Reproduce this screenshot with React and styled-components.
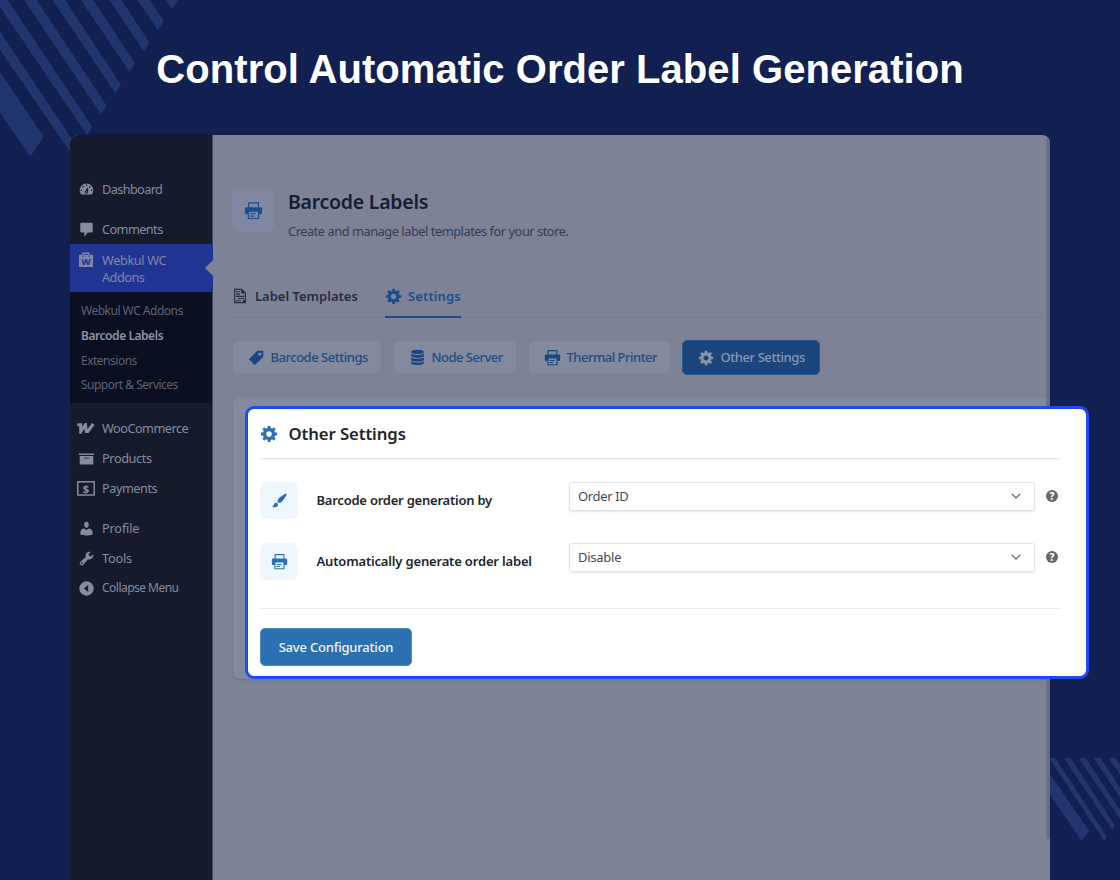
import React from 'react';
import styled, { createGlobalStyle } from 'styled-components';

const GlobalStyle = createGlobalStyle`
  * { box-sizing: border-box; }
  body {
    margin: 0;
    background: #112050;
    font-family: "Noto Sans", "Open Sans", sans-serif;
  }
`;

const Page = styled.div`
  position: relative;
  width: 1120px;
  height: 880px;
  overflow: hidden;
  background: #112050;
`;

const Stripes = styled.svg`
  position: absolute;
  inset: 0;
  fill: #21366f;
`;

const Title = styled.h1`
  position: relative;
  margin: 0;
  height: 135px;
  padding-top: 45px;
  font: bold 40px/48px "Liberation Sans", Arial, sans-serif;
  letter-spacing: 0.05px;
  text-align: center;
  color: #fff;
`;

const Window = styled.div`
  position: relative;
  display: flex;
  width: 980px;
  height: 745px;
  margin: 0 auto;
  border-radius: 8px 8px 0 0;
  overflow: hidden;
  background: #7d8296;
`;

const Text = styled.span`
  white-space: nowrap;
  letter-spacing: ${(props) => props.$ls || 0}px;
`;

/* sidebar */

const Sidebar = styled.nav`
  width: 143px;
  padding-top: 39px;
  background: #151a2d;
  border-right: 1px solid #44495c;
  color: #868b9d;
`;

const MenuItem = styled.div`
  display: flex;
  align-items: center;
  height: 30px;
  margin-top: ${(props) => props.$gap || 0}px;
  padding-left: 6px;
  font-size: ${(props) => props.$size || 12.7}px;
  line-height: 16px;
`;

const IconSlot = styled.span`
  display: flex;
  justify-content: center;
  width: 20px;
  margin-right: 6px;
`;

const ActiveItem = styled.div`
  position: relative;
  display: flex;
  width: 143px;
  height: 48px;
  padding: 8px 0 0 6px;
  background: #203593;
  font-size: 12.7px;
  line-height: 16.5px;
  color: #8086a8;

  &::after {
    content: '';
    position: absolute;
    right: 0;
    top: 16px;
    border: 8px solid transparent;
    border-left: 0;
    border-right-color: #7d8296;
  }
`;

const Lines = styled.div`
  display: flex;
  flex-direction: column;
`;

const SubMenu = styled.div`
  height: 111px;
  margin-bottom: 10px;
  padding: 7px 0 0 11px;
  background: #0a0f22;
`;

const SubItem = styled.div`
  height: 24.8px;
  font-size: 12px;
  line-height: 24px;
  font-weight: ${(props) => (props.$active ? 600 : 400)};
  color: ${(props) => (props.$active ? '#8e92a2' : '#5d6274')};
`;

/* main */

const Main = styled.main`
  flex: 1;
  padding: 54px 0 0 19px;
`;

const PageHeader = styled.header`
  display: flex;
  height: 88px;
`;

const HeaderIcon = styled.div`
  display: flex;
  align-items: center;
  justify-content: center;
  width: 43px;
  height: 43px;
  margin-right: 13px;
  border-radius: 8px;
  background: #7f88a0;
  color: #1c4d88;
`;

const PageTitle = styled.div`
  font-size: 19.5px;
  line-height: 26px;
  font-weight: 600;
  color: #161d36;
`;

const PageSub = styled.div`
  margin-top: 7px;
  font-size: 12.8px;
  line-height: 18px;
  color: #363d55;
`;

const Tabs = styled.div`
  display: flex;
  gap: 27px;
  height: 41px;
  margin-right: 3px;
  border-bottom: 1px solid #757b91;
`;

const Tab = styled.div`
  display: flex;
  align-items: center;
  gap: ${(props) => props.$gap}px;
  width: ${(props) => props.$w}px;
  height: 41px;
  padding-bottom: 1px;
  font-size: 13px;
  font-weight: 600;
  color: ${(props) => (props.$active ? '#1d4e8c' : '#262d45')};
  border-bottom: 2px solid ${(props) => (props.$active ? '#1d4e8c' : 'transparent')};
`;

const Pills = styled.div`
  display: flex;
  align-items: center;
  gap: 11px;
  height: 34px;
  margin-top: 22px;
`;

const Pill = styled.div`
  display: flex;
  align-items: center;
  gap: 6px;
  width: ${(props) => props.$w}px;
  height: ${(props) => (props.$active ? 35 : 34)}px;
  padding-left: 14.5px;
  border: 1px solid ${(props) => (props.$active ? '#2a568f' : '#7a8298')};
  border-radius: 5px;
  background: ${(props) => (props.$active ? '#1b457d' : '#838a9e')};
  font-size: 13px;
  font-weight: 500;
  color: ${(props) => (props.$active ? '#8c97ad' : '#214c85')};

  svg { color: ${(props) => (props.$active ? '#8a93a8' : '#1b4680')}; }
`;

const BackCard = styled.div`
  height: 282px;
  margin: 23px 3px 0 1px;
  border: 1px solid #7f869b;
  border-radius: 6px 0 0 6px;
  background: #848a9e;
  box-shadow: 0 1px 2px rgba(60, 66, 90, 0.2);
`;

const ScrollTrack = styled.div`
  position: absolute;
  right: 0;
  top: 0;
  width: 4px;
  height: 704px;
  border-left: 1px solid #72778b;
  background: #686d80;
`;

/* highlighted settings card */

const Card = styled.section`
  position: absolute;
  left: 245px;
  top: 406px;
  width: 844px;
  height: 273px;
  padding: 9px 25px 0 12px;
  border: 3px solid #2049f5;
  border-radius: 9px;
  background: #fff;
`;

const CardHead = styled.div`
  display: flex;
  align-items: center;
  gap: 9.5px;
  height: 41px;
  padding-bottom: 9px;
  border-bottom: 1px solid #e6e7e9;
  box-shadow: 0 1px 0 #f6f6f7;
  font-size: 16.7px;
  font-weight: 600;
  color: #22252a;

  svg { color: #2b71b1; }
`;

const Rows = styled.div`
  height: 150px;
  padding-top: 23px;
  border-bottom: 1px solid #e8e9eb;
`;

const Row = styled.div`
  display: grid;
  grid-template-columns: 56px 253px 466px 1fr;
  height: 61px;
`;

const SquareIcon = styled.div`
  display: flex;
  align-items: center;
  justify-content: center;
  width: 38px;
  height: 37px;
  border-radius: 7px;
  background: #f0f6fd;
  color: #2b71b1;
`;

const RowLabel = styled.div`
  padding-left: 0.5px;
  font-size: 13px;
  line-height: 37px;
  font-weight: 600;
  color: #22262c;
`;

const Select = styled.div`
  display: flex;
  align-items: center;
  justify-content: space-between;
  height: 29px;
  padding: 0 12px 1px 8px;
  border: 1px solid #e0e2e5;
  border-radius: 3px;
  box-shadow: 0 1px 2px rgba(0, 0, 0, 0.1);
  font-size: 13px;
  color: #454b52;
`;

const Help = styled.div`
  display: flex;
  align-items: center;
  justify-content: center;
  width: 12px;
  height: 12px;
  margin: 8px 0 0 11px;
  border-radius: 50%;
  background: #646970;
  font-size: 10px;
  line-height: 12px;
  font-weight: 800;
  color: #fff;
`;

const SaveButton = styled.button`
  display: flex;
  align-items: center;
  justify-content: center;
  width: 152px;
  height: 38px;
  margin-top: 19px;
  padding: 0;
  border: 1px solid #4a8ac2;
  border-radius: 5px;
  background: #2b71b1;
  font: 500 13px "Noto Sans", sans-serif;
  color: #f1f6fb;
`;

/* icons */

const paths = {
  dashboard: 'M3.76 16h12.48c1.1-1.37 1.76-3.11 1.76-5 0-4.42-3.58-8-8-8s-8 3.58-8 8c0 1.89.66 3.63 1.76 5zM10 4c.55 0 1 .45 1 1s-.45 1-1 1-1-.45-1-1 .45-1 1-1zM6 6c.55 0 1 .45 1 1s-.45 1-1 1-1-.45-1-1 .45-1 1-1zm8 0c.55 0 1 .45 1 1s-.45 1-1 1-1-.45-1-1 .45-1 1-1zm-5.37 5.55L12 7v6c0 1.1-.9 2-2 2s-2-.9-2-2c0-.57.24-1.08.63-1.45zM4 10c.55 0 1 .45 1 1s-.45 1-1 1-1-.45-1-1 .45-1 1-1zm12 0c.55 0 1 .45 1 1s-.45 1-1 1-1-.45-1-1 .45-1 1-1zm-5 3c0-.55-.45-1-1-1s-1 .45-1 1 .45 1 1 1 1-.45 1-1z',
  comments: 'M4 2h12c.8 0 1.3.5 1.3 1.3v9c0 .8-.5 1.3-1.3 1.3h-4.500L7.500 18.500v-4.900H4c-.8 0-1.300-.5-1.300-1.300v-9C2.700 2.500 3.200 2 4 2z',
  archive: 'M19 4v2H1V4h18zM2 7h16v10H2V7zm11 3V9H7v1h6z',
  user: 'M10 9.25c-2.27 0-2.73-3.44-2.73-3.44C7 4.02 7.82 2 9.97 2c2.16 0 2.98 2.02 2.71 3.81 0 0-.41 3.44-2.68 3.44zm0 2.57L12.72 10c2.39 0 4.52 2.33 4.52 4.53v2.49s-3.65 1.13-7.24 1.13c-3.65 0-7.24-1.13-7.24-1.13v-2.49c0-2.25 1.94-4.48 4.47-4.48z',
  tools: 'M16.68 9.77c-1.34 1.34-3.3 1.67-4.95.99l-5.41 6.52c-.99.99-2.59.99-3.58 0s-.99-2.59 0-3.57l6.52-5.42c-.68-1.65-.35-3.61.99-4.95 1.28-1.28 3.12-1.62 4.72-1.06l-2.89 2.89 2.82 2.82 2.86-2.87c.53 1.58.18 3.39-1.08 4.65zM3.81 16.21c.4.39 1.04.39 1.43 0 .4-.4.4-1.04 0-1.43-.39-.4-1.03-.4-1.43 0-.39.39-.39 1.03 0 1.43z',
  collapse: 'M10 1.500a8.500 8.500 0 1 1 0 17 8.500 8.500 0 0 1 0-17zM12 14V6l-5 4z',
  gear: 'M18 12h-2.18c-.17.7-.44 1.35-.81 1.93l1.54 1.54-2.1 2.1-1.54-1.54c-.58.36-1.23.63-1.91.79V19H8v-2.18c-.68-.16-1.33-.43-1.91-.79l-1.54 1.54-2.12-2.12 1.54-1.54c-.36-.58-.63-1.23-.79-1.91H1V9.03h2.17c.16-.7.44-1.35.8-1.94L2.43 5.55l2.1-2.1 1.54 1.54c.58-.37 1.24-.64 1.93-.81V2h3v2.18c.68.16 1.33.43 1.91.79l1.54-1.54 2.12 2.12-1.54 1.54c.36.59.64 1.24.8 1.94H18V12zm-8.5 1.5c1.66 0 3-1.34 3-3s-1.34-3-3-3-3 1.34-3 3 1.34 3 3 3z',
  tag: 'M11 2h7v7L8 19l-7-7zm3 6c1.1 0 2-.9 2-2s-.9-2-2-2-2 .9-2 2 .9 2 2 2z',
  brush: 'M18.33 3.57s.27-.8-.31-1.36c-.53-.52-1.22-.24-1.22-.24-.61.3-5.76 3.47-7.67 5.57-.86.96-2.06 3.79-1.09 4.82.92.98 3.96-.17 4.79-1 2.06-2.06 5.21-7.17 5.5-7.79zM1.4 17.65c2.37-1.56 1.46-3.41 3.23-4.64.93-.65 2.22-.62 3.08.29.63.67.8 2.57-.16 3.46-1.57 1.45-4 1.55-6.15.89z',
  printer: 'M4.200 1.200h11.600v5.300H4.200zM5.500 2.500v4h9v-4zM2.300 6.500h15.400Q19 6.500 19 8v4.500q0 1.500-1.300 1.500H16v5H4v-5H2.300Q1 14 1 12.500V8q0-1.500 1.300-1.500zM5.300 11.300h9.400v6.500H5.300zM6.600 12.800h5.800v1.200H6.600zM6.600 15.300h4v1.200h-4z',
  database: 'M10 1c4.500 0 7.500 1 7.500 2.500S14.500 6 10 6 2.500 5 2.500 3.500 5.500 1 10 1zM2.500 5.300C4 6.600 7 7 10 7s6-.4 7.500-1.700V8c0 1.500-3.500 2.300-7.500 2.300S2.500 9.500 2.500 8zM2.500 9.800c1.500 1.300 4.500 1.700 7.500 1.700s6-.4 7.500-1.700v2.700c0 1.500-3.500 2.300-7.500 2.300s-7.500-.8-7.500-2.300zM2.500 14.300C4 15.600 7 16 10 16s6-.4 7.500-1.700v2.200c0 1.500-3.500 2.500-7.500 2.500s-7.500-1-7.500-2.500z',
  doc: 'M2.500 1h10l5 5v13h-15zM4 2.500v15h9.500V15H16V7h-4.500V2.500zM5 4h5v1.300H5zM5 7h5v1.300H5zM5 9.800h10v1.300H5zM7.500 12.500H15v1.300H7.500zM5 15.300h6v1.300H5z',
};

const Icon = ({ name, size = 17 }) => (
  <svg width={size} height={size} viewBox="0 0 20 20" fill="currentColor" fillRule="evenodd">
    <path d={paths[name]} />
  </svg>
);

const BagIcon = () => (
  <svg width="16" height="16" viewBox="0 0 16 16">
    <path d="M5 4V1.200h6V4" fill="none" stroke="currentColor" strokeWidth="1.400" />
    <path d="M1 2.800h3v1.700h2V2.800h4v1.700h2V2.800h3V15H1z" fill="currentColor" />
    <text x="8" y="13" textAnchor="middle" fontSize="9.500" fontWeight="800" fill="#203593">W</text>
  </svg>
);

const WooIcon = () => (
  <svg width="18" height="11" viewBox="0 0 18 11" fill="none" stroke="currentColor" strokeWidth="3.100">
    <polyline points="0.300,1.700 3.600,1.700 3.800,8.400 8.500,1.800 9.300,8.400 10.800,8.400 16.300,0.800" />
  </svg>
);

const MoneyIcon = () => (
  <svg width="18" height="15" viewBox="0 0 18 15">
    <rect x="0.800" y="0.800" width="16.400" height="13.200" fill="none" stroke="currentColor" strokeWidth="1.500" />
    <text x="9" y="11.500" textAnchor="middle" fontSize="11" fontWeight="800" fill="currentColor">$</text>
  </svg>
);

const Chevron = () => (
  <svg width="12" height="12" viewBox="0 0 12 12" fill="none" stroke="#70757c" strokeWidth="1.400">
    <path d="M1.700 3.700L6 8l4.300-4.300" />
  </svg>
);

const menuBottom = [
  { label: 'WooCommerce', icon: <WooIcon />, ls: -0.5 },
  { label: 'Products', icon: <Icon name="archive" />, ls: -0.38 },
  { label: 'Payments', icon: <MoneyIcon />, ls: -0.45 },
  { label: 'Profile', icon: <Icon name="user" />, gap: 10, ls: -0.15 },
  { label: 'Tools', icon: <Icon name="tools" />, ls: -0.2 },
  { label: 'Collapse Menu', icon: <Icon name="collapse" />, size: 12, ls: -0.52 },
];

const subItems = [
  { label: 'Webkul WC Addons', ls: -0.5 },
  { label: 'Barcode Labels', active: true, ls: -0.45 },
  { label: 'Extensions', ls: -0.5 },
  { label: 'Support & Services', ls: -0.52 },
];

const pills = [
  { label: 'Barcode Settings', icon: 'tag', w: 150, ls: -0.48 },
  { label: 'Node Server', icon: 'database', w: 124, ls: -0.52 },
  { label: 'Thermal Printer', icon: 'printer', w: 143, ls: -0.5 },
  { label: 'Other Settings', icon: 'gear', w: 138, active: true, ls: -0.42 },
];

const settings = [
  { label: 'Barcode order generation by', icon: 'brush', value: 'Order ID', ls: -0.23, vls: -0.35 },
  { label: 'Automatically generate order label', icon: 'printer', value: 'Disable', ls: -0.17, vls: -0.25 },
];

const App = () => {
  return (
    <Page>
      <GlobalStyle />
      <Stripes width="1120" height="880" viewBox="0 0 1120 880">
        <polygon points="0,72 43.700,136.500 30.500,156.500 0,113" />
        <polygon points="0,31.500 78,148 73,156 0,50" />
        <polygon points="0,0 7.500,0 92.300,127 87,135 0,7" />
        <polygon points="24.200,0 36.500,0 106.700,105.700 101,114" />
        <polygon points="52.500,0 65,0 121,84.700 115.300,93" />
        <polygon points="81,0 93.300,0 135,63.500 129.500,72" />
        <polygon points="109.300,0 121.500,0 149.300,42.300 143.700,51" />
        <polygon points="137.500,0 150,0 163.700,21.300 158,30" />
        <polygon points="166,0 178,0 172.300,9" />
        <polygon points="1050,774 1089,830.700 1081.700,841 1050,794.500" />
        <polygon points="1050,758 1055.300,758 1107,837 1104.300,841 1050,759.500" />
        <polygon points="1063.700,758 1070.500,758 1115,825.700 1112.500,830" />
        <polygon points="1078.700,758 1085.500,758 1120,810 1120,819" />
        <polygon points="1093.700,758 1100.500,758 1120,787.500 1120,797" />
        <polygon points="1108.700,758 1115.500,758 1120,764.500 1120,774.500" />
      </Stripes>
      <Title>Control Automatic Order Label Generation</Title>

      <Window>
        <Sidebar>
          <MenuItem>
            <IconSlot><Icon name="dashboard" /></IconSlot>
            <Text $ls={-0.6}>Dashboard</Text>
          </MenuItem>
          <MenuItem $gap={10}>
            <IconSlot><Icon name="comments" /></IconSlot>
            <Text $ls={-0.55}>Comments</Text>
          </MenuItem>
          <ActiveItem>
            <IconSlot><BagIcon /></IconSlot>
            <Lines>
              <Text $ls={-0.36}>Webkul WC</Text>
              <Text $ls={-0.5}>Addons</Text>
            </Lines>
          </ActiveItem>
          <SubMenu>
            {subItems.map((item) => (
              <SubItem key={item.label} $active={item.active}>
                <Text $ls={item.ls}>{item.label}</Text>
              </SubItem>
            ))}
          </SubMenu>
          {menuBottom.map((item) => (
            <MenuItem key={item.label} $gap={item.gap} $size={item.size}>
              <IconSlot>{item.icon}</IconSlot>
              <Text $ls={item.ls}>{item.label}</Text>
            </MenuItem>
          ))}
        </Sidebar>

        <Main>
          <PageHeader>
            <HeaderIcon><Icon name="printer" size={19} /></HeaderIcon>
            <div>
              <PageTitle><Text $ls={-0.26}>Barcode Labels</Text></PageTitle>
              <PageSub><Text $ls={-0.46}>Create and manage label templates for your store.</Text></PageSub>
            </div>
          </PageHeader>
          <Tabs>
            <Tab $w={126} $gap={7}>
              <Icon name="doc" size={16} />
              <Text>Label Templates</Text>
            </Tab>
            <Tab $w={76} $gap={5} $active>
              <Icon name="gear" size={18} />
              <Text $ls={0.12}>Settings</Text>
            </Tab>
          </Tabs>
          <Pills>
            {pills.map((pill) => (
              <Pill key={pill.label} $w={pill.w} $active={pill.active}>
                <Icon name={pill.icon} />
                <Text $ls={pill.ls}>{pill.label}</Text>
              </Pill>
            ))}
          </Pills>
          <BackCard />
        </Main>
        <ScrollTrack />
      </Window>

      <Card>
        <CardHead>
          <Icon name="gear" size={19} />
          <Text $ls={-0.08}>Other Settings</Text>
        </CardHead>
        <Rows>
          {settings.map((row) => (
            <Row key={row.label}>
              <SquareIcon><Icon name={row.icon} /></SquareIcon>
              <RowLabel><Text $ls={row.ls}>{row.label}</Text></RowLabel>
              <Select>
                <Text $ls={row.vls}>{row.value}</Text>
                <Chevron />
              </Select>
              <Help>?</Help>
            </Row>
          ))}
        </Rows>
        <SaveButton><Text $ls={-0.2}>Save Configuration</Text></SaveButton>
      </Card>
    </Page>
  );
};

export default App;
